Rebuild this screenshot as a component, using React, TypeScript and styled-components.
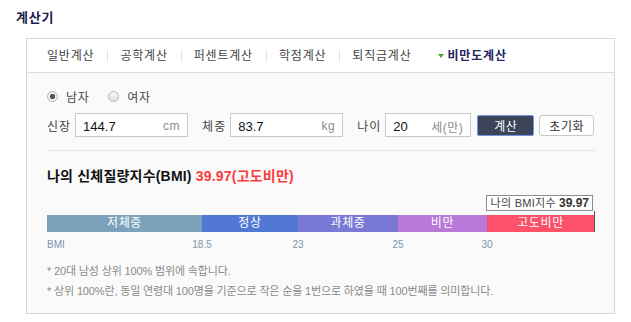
import React from "react";
import styled, { createGlobalStyle } from "styled-components";

const GlobalStyle = createGlobalStyle`
  body {
    margin: 0;
    background: #fff;
    font-family: "Liberation Sans", "Noto Sans CJK KR", sans-serif;
    color: #333;
  }
`;

const Page = styled.div`
  padding: 8px 16px 0 16px;
  width: 631px;
  box-sizing: border-box;
`;

const Title = styled.h2`
  margin: 0;
  font-size: 13px;
  line-height: 20px;
  font-weight: bold;
  letter-spacing: 0.8px;
  color: #1c1c4e;
`;

const Box = styled.div`
  margin: 10px 0 0 10px;
  width: 589px;
  box-sizing: border-box;
  border: 1px solid #d6d6d6;
  background: #fafafa;
`;

const Tabs = styled.ul`
  display: flex;
  align-items: center;
  height: 33px;
  margin: 0;
  padding: 0 0 0 7px;
  list-style: none;
  background: #fff;
  border-bottom: 1px solid #dcdcdc;
`;

const Tab = styled.li<{ $active?: boolean }>`
  position: relative;
  display: flex;
  align-items: center;
  gap: 4px;
  padding: 0 13px;
  font-size: 12px;
  line-height: 16px;
  letter-spacing: 0.8px;
  color: ${(p) => (p.$active ? "#23235e" : "#444")};
  font-weight: ${(p) => (p.$active ? "bold" : "normal")};
  & + &::before {
    content: "";
    position: absolute;
    left: 0;
    top: 2px;
    width: 1px;
    height: 12px;
    background: #e2e2e2;
  }
`;

const Arrow = styled.span`
  width: 0;
  height: 0;
  border-left: 3px solid transparent;
  border-right: 3px solid transparent;
  border-top: 4px solid #4aa626;
`;

const Body = styled.div`
  padding: 15px 19px 12px 20px;
`;

const RadioRow = styled.div`
  display: flex;
  align-items: center;
  height: 16px;
`;

const RadioLabel = styled.label`
  display: flex;
  align-items: center;
  gap: 8px;
  margin-right: 19px;
  font-size: 12px;
  letter-spacing: 0.6px;
  color: #444;
`;

const RadioDot = styled.span<{ $on?: boolean }>`
  width: 11px;
  height: 11px;
  box-sizing: border-box;
  border-radius: 50%;
  border: 1px solid #b5b5b5;
  background: ${(p) =>
    p.$on
      ? "radial-gradient(circle, #555 0 2.5px, #f2f2f2 3px)"
      : "linear-gradient(#fafafa, #dedede)"};
`;

const InputRow = styled.div`
  display: flex;
  align-items: center;
  margin-top: 9px;
  height: 24px;
`;

const FieldLabel = styled.span`
  font-size: 12px;
  letter-spacing: 1px;
  color: #444;
  margin-right: 4px;
`;

const Field = styled.div<{ $w: number }>`
  display: flex;
  align-items: center;
  justify-content: space-between;
  width: ${(p) => p.$w}px;
  height: 24px;
  box-sizing: border-box;
  padding: 2px 7px 0 7px;
  margin-right: 14px;
  border: 1px solid #c9c9c9;
  background: #fff;
`;

const Value = styled.span`
  font-size: 13px;
  color: #111;
`;

const Unit = styled.span`
  font-size: 12px;
  letter-spacing: 0.5px;
  color: #8a8a8a;
`;

const Button = styled.button<{ $primary?: boolean }>`
  height: 21px;
  padding: 0;
  margin-left: ${(p) => (p.$primary ? "-8px" : "5px")};
  width: ${(p) => (p.$primary ? "57px" : "55px")};
  font-family: inherit;
  font-size: 12px;
  letter-spacing: 0.6px;
  border-radius: ${(p) => (p.$primary ? "2px" : "3px")};
  border: 1px solid ${(p) => (p.$primary ? "#7096df" : "#c8c8c8")};
  background: ${(p) => (p.$primary ? "#3b4459" : "#fff")};
  color: ${(p) => (p.$primary ? "#fff" : "#333")};
`;

const Divider = styled.div`
  height: 1px;
  background: #e6e6e6;
  margin-top: 13px;
`;

const Heading = styled.h3`
  margin: 17px 0 0;
  font-size: 14px;
  line-height: 16px;
  font-weight: bold;
  letter-spacing: 0.2px;
  color: #111;
`;

const Result = styled.span`
  color: #fb3d3d;
`;

const Pointer = styled.div`
  display: flex;
  flex-direction: column;
  align-items: flex-end;
  margin-top: 11px;
`;

const Tip = styled.div`
  height: 16px;
  box-sizing: border-box;
  margin-right: 2px;
  padding: 0 3px;
  border: 1px solid #8c8c8c;
  background: #fff;
  font-size: 11px;
  line-height: 14px;
  letter-spacing: 0.3px;
  color: #444;
  b {
    font-size: 12px;
    color: #333;
    margin-left: 3px;
    letter-spacing: 0;
  }
`;

const Stem = styled.div`
  width: 1px;
  height: 4px;
  background: #555;
`;

const Bar = styled.div`
  display: flex;
  height: 17px;
  border-right: 1px solid #555;
`;

const Segment = styled.div<{ $w: number; $c: string }>`
  width: ${(p) => p.$w}px;
  background: ${(p) => p.$c};
  color: #fff;
  font-size: 12px;
  line-height: 17px;
  letter-spacing: 0.6px;
  text-align: center;
`;

const Scale = styled.div`
  display: flex;
  height: 14px;
  margin-top: 2px;
`;

const Tick = styled.div<{ $w: number; $first?: boolean }>`
  width: ${(p) => p.$w}px;
  span {
    display: inline-block;
    font-size: 10px;
    line-height: 14px;
    color: #7f93ab;
    transform: ${(p) => (p.$first ? "none" : "translateX(-50%)")};
  }
`;

const Notes = styled.ul`
  margin: 13px 0 0;
  padding: 0;
  list-style: none;
`;

const Note = styled.li`
  font-size: 11px;
  line-height: 20px;
  letter-spacing: -0.15px;
  color: #8a8a8a;
`;

const tabs = ["일반계산", "공학계산", "퍼센트계산", "학점계산", "퇴직금계산"];

const segments = [
  { label: "저체중", from: "BMI", w: 155, c: "#7ca2bb" },
  { label: "정상", from: "18.5", w: 96, c: "#5179d4" },
  { label: "과체중", from: "23", w: 100, c: "#7979d5" },
  { label: "비만", from: "25", w: 89, c: "#b979d9" },
  { label: "고도비만", from: "30", w: 107, c: "#fc5168" },
];

export default function App() {
  return (
    <>
      <GlobalStyle />
      <Page>
        <Title>계산기</Title>
        <Box>
          <Tabs>
            {tabs.map((t) => (
              <Tab key={t}>{t}</Tab>
            ))}
            <Tab $active>
              <Arrow />
              비만도계산
            </Tab>
          </Tabs>
          <Body>
            <RadioRow>
              <RadioLabel>
                <RadioDot $on />
                남자
              </RadioLabel>
              <RadioLabel>
                <RadioDot />
                여자
              </RadioLabel>
            </RadioRow>
            <InputRow>
              <FieldLabel>신장</FieldLabel>
              <Field $w={113}>
                <Value>144.7</Value>
                <Unit>cm</Unit>
              </Field>
              <FieldLabel>체중</FieldLabel>
              <Field $w={113}>
                <Value>83.7</Value>
                <Unit>kg</Unit>
              </Field>
              <FieldLabel>나이</FieldLabel>
              <Field $w={86}>
                <Value>20</Value>
                <Unit>세(만)</Unit>
              </Field>
              <Button $primary>계산</Button>
              <Button>초기화</Button>
            </InputRow>
            <Divider />
            <Heading>
              나의 신체질량지수(BMI) <Result>39.97(고도비만)</Result>
            </Heading>
            <Pointer>
              <Tip>
                나의 BMI지수<b>39.97</b>
              </Tip>
              <Stem />
            </Pointer>
            <Bar>
              {segments.map((s) => (
                <Segment key={s.label} $w={s.w} $c={s.c}>
                  {s.label}
                </Segment>
              ))}
            </Bar>
            <Scale>
              {segments.map((s, i) => (
                <Tick key={s.from} $w={s.w} $first={i === 0}>
                  <span>{s.from}</span>
                </Tick>
              ))}
            </Scale>
            <Notes>
              <Note>* 20대 남성 상위 100% 범위에 속합니다.</Note>
              <Note>
                * 상위 100%란, 동일 연령대 100명을 기준으로 작은 순을 1번으로 하였을 때
                100번째를 의미합니다.
              </Note>
            </Notes>
          </Body>
        </Box>
      </Page>
    </>
  );
}
